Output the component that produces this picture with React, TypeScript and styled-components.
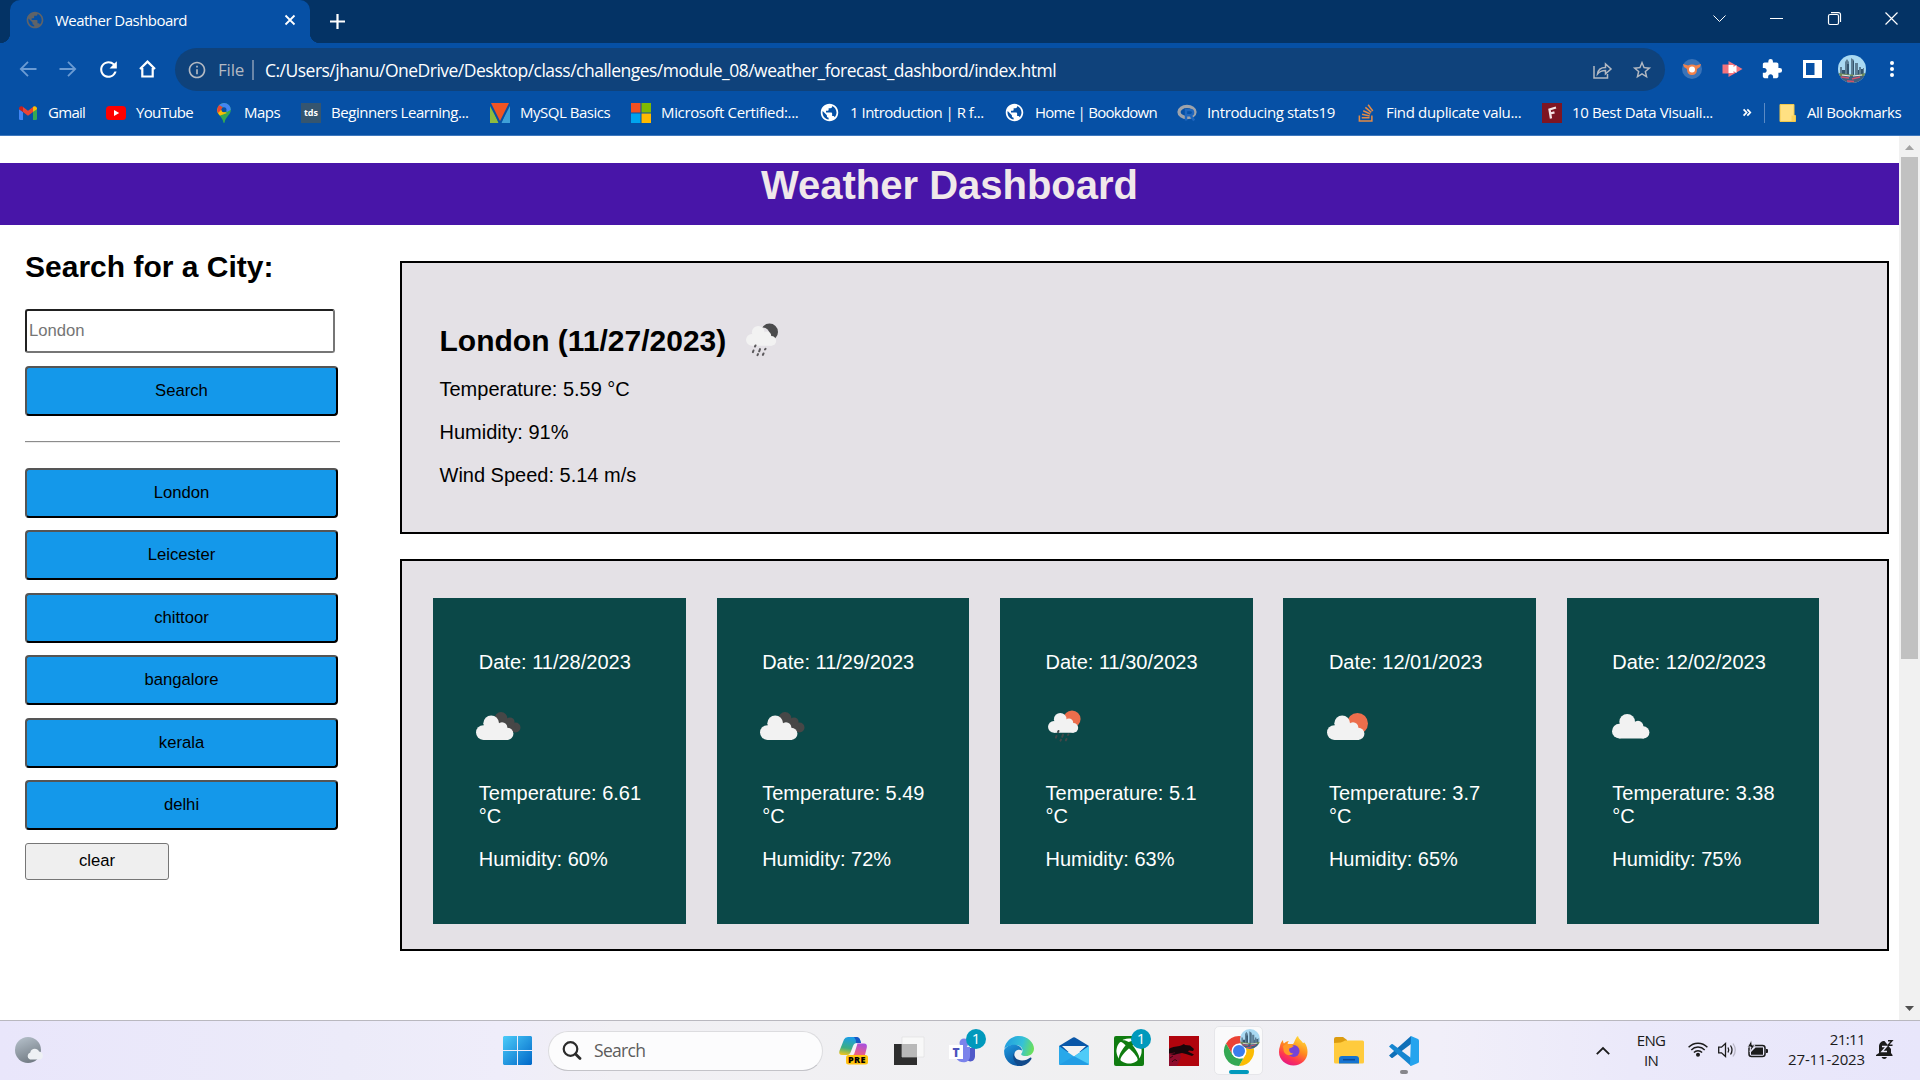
import React from 'react';
import styled, { createGlobalStyle } from 'styled-components';
import { MdPublic, MdExtension, MdRefresh, MdStarBorder, MdInfoOutline } from 'react-icons/md';
import { FaStackOverflow, FaXbox } from 'react-icons/fa';

const Global = createGlobalStyle`
  *, *::before, *::after { box-sizing: border-box; }
  body { margin: 0; background: #fff; overflow: hidden; font-family: "Liberation Sans", Arial, sans-serif; color: #000; }
`;

const uiFont = '"Open Sans", "Noto Sans", sans-serif';

const Screen = styled.div`
  width: 1920px;
  height: 1080px;
  display: flex;
  flex-direction: column;
  overflow: hidden;
`;

const Text = styled.span<{ $ls?: number }>`
  font-family: ${uiFont};
  letter-spacing: ${(p) => p.$ls ?? -0.45}px;
  white-space: nowrap;
`;

/* ---------- browser chrome ---------- */

const TabStrip = styled.div`
  height: 43px;
  background: #043365;
  display: flex;
  padding-left: 10px;
  color: #fff;
`;

const Tab = styled.div`
  position: relative;
  width: 300px;
  height: 43px;
  background: #0650a5;
  border-radius: 10px 10px 0 0;
  display: flex;
  align-items: center;
  padding: 0 15px 3px 15px;
  font-size: 15px;
  &::before,
  &::after {
    content: '';
    position: absolute;
    bottom: 0;
    width: 10px;
    height: 10px;
  }
  &::before {
    left: -10px;
    background: radial-gradient(circle at 0 0, transparent 10px, #0650a5 10.5px);
  }
  &::after {
    right: -10px;
    background: radial-gradient(circle at 100% 0, transparent 10px, #0650a5 10.5px);
  }
`;

const TabTitle = styled(Text)`
  margin-left: 10px;
  flex: 1;
`;

const Glyph = styled.svg`
  display: block;
  flex: none;
  overflow: visible;
`;

const NewTab = styled.div`
  display: flex;
  align-items: center;
  margin-left: 20px;
  padding-bottom: 1px;
`;

const WindowControls = styled.div`
  margin-left: auto;
  display: flex;
  align-items: center;
  height: 37px;
`;

const WindowButton = styled.div`
  width: 57.3px;
  display: flex;
  justify-content: center;
`;

const Toolbar = styled.div`
  height: 53px;
  background: #0650a5;
  display: flex;
  align-items: center;
  padding: 0 8px;
  color: #fff;
`;

const ToolCell = styled.div<{ $dim?: boolean }>`
  width: 40px;
  height: 40px;
  padding-bottom: 1px;
  display: flex;
  align-items: center;
  justify-content: center;
  color: ${(p) => (p.$dim ? '#6b9bd3' : '#fff')};
`;

const Omnibox = styled.div`
  width: 1490px;
  height: 43px;
  margin: 0 7px;
  border-radius: 22px;
  background: #0f427b;
  display: flex;
  align-items: center;
  padding: 0 3px 0 12px;
  color: #b3b9c2;
`;

const Scheme = styled(Text)`
  margin-left: 11px;
  font-size: 17px;
`;

const SchemeRule = styled.span`
  width: 2px;
  height: 20px;
  margin: 0 11px 0 8px;
  background: #6a86a8;
`;

const Address = styled(Text)`
  flex: 1;
  font-size: 17.5px;
  color: #fff;
`;

const OmniAction = styled.div`
  width: 40px;
  display: flex;
  justify-content: center;
`;

const BookmarkBar = styled.div`
  height: 40px;
  background: #0650a5;
  border-bottom: 1px solid #3e78bd;
  display: flex;
  align-items: center;
  padding: 0 16px 6px 18px;
  color: #fff;
  font-size: 15px;
`;

const Bookmark = styled.div<{ $w: number }>`
  width: ${(p) => p.$w}px;
  flex: none;
  display: flex;
  align-items: center;
  gap: 10px;
`;

const BookmarkLabel = styled(Text)`
  padding-bottom: 2px;
`;

const BookmarkRule = styled.span`
  width: 1px;
  height: 20px;
  margin: 0 14px 0 13px;
  background: #5b8ac4;
`;

const FaviconTile = styled.span<{ $bg: string; $size: number }>`
  width: 20px;
  height: 20px;
  flex: none;
  background: ${(p) => p.$bg};
  color: #fff;
  font: 700 ${(p) => p.$size}px/19px ${uiFont};
  text-align: center;
`;

/* ---------- page ---------- */

const Viewport = styled.div`
  height: 884px;
  display: flex;
`;

const Page = styled.div`
  flex: 1;
  background: #fff;
`;

const Banner = styled.h1`
  margin: 27px 0 0;
  height: 62px;
  background: #4815a8;
  color: #f0e8ea;
  font-size: 40px;
  line-height: 44px;
  font-weight: 700;
  text-align: center;
`;

const Columns = styled.div`
  display: flex;
`;

const Sidebar = styled.aside`
  width: 400px;
  padding: 25px 60px 0 25px;
`;

const SidebarTitle = styled.h2`
  margin: 0 0 25px;
  font-size: 30px;
  line-height: 34px;
`;

const CityInput = styled.input`
  display: block;
  width: 310px;
  height: 44px;
  padding: 0 2px;
  border: 2px solid;
  border-color: #212121 #767676 #767676 #212121;
  border-radius: 3px;
  background: #fff;
  font: 16.67px 'Liberation Sans', Arial, sans-serif;
  &::placeholder {
    color: #757575;
  }
`;

const CityButton = styled.button`
  display: block;
  width: 313px;
  height: 50px;
  padding: 0;
  border: 2px solid;
  border-color: #555 #000 #000 #555;
  border-radius: 4px;
  background: #1498ea;
  color: #000;
  font: 16.67px 'Liberation Sans', Arial, sans-serif;
`;

const SearchButton = styled(CityButton)`
  margin-top: 13px;
`;

const Rule = styled.hr`
  width: 315px;
  margin: 25px 0 24.75px;
  height: 2px;
  border: 0;
  border-top: 1px solid #8c8c8c;
  border-bottom: 1px solid #ececec;
`;

const History = styled.div`
  display: flex;
  flex-direction: column;
  gap: 12.5px;
`;

const ClearButton = styled.button`
  width: 144px;
  height: 37px;
  padding: 0;
  border: 1px solid #767676;
  border-radius: 3px;
  background: #efefef;
  color: #000;
  font: 16.67px 'Liberation Sans', Arial, sans-serif;
`;

const Main = styled.main`
  width: 1489px;
  padding-top: 36px;
  display: flex;
  flex-direction: column;
  gap: 25px;
`;

const Today = styled.section`
  height: 273px;
  padding: 61px 37.5px 0;
  border: 2px solid #000;
  background: #e4e1e6;
`;

const TodayHeading = styled.h2`
  margin: 0;
  height: 34px;
  display: flex;
  align-items: center;
  gap: 19px;
  font-size: 30px;
  line-height: 34px;
`;

const Reading = styled.p`
  margin: 20px 0 0;
  font-size: 20px;
  line-height: 23px;
`;

const Forecast = styled.section`
  height: 392px;
  padding: 37px 31px 25px 31.3px;
  border: 2px solid #000;
  background: #e4e1e6;
  display: flex;
  gap: 30.88px;
`;

const Card = styled.article`
  width: 252.5px;
  flex: none;
  padding: 53px 34px 0 45.5px;
  background: #0b4848;
  color: #fff;
  font-size: 20px;
  line-height: 23px;
`;

const CardIcon = styled.div`
  height: 68px;
  margin: 20px 0 0 -2.5px;
  padding-top: 12px;
`;

const ScrollTrack = styled.div`
  width: 21px;
  background: #f1f1f1;
  display: flex;
  flex-direction: column;
  align-items: center;
  padding: 9px 0 9px;
`;

const ScrollThumb = styled.div`
  width: 17px;
  height: 502px;
  margin: 7px 0 auto;
  background: #c1c1c1;
`;

/* ---------- taskbar ---------- */

const Taskbar = styled.footer`
  height: 60px;
  border-top: 1px solid #b9b8bf;
  background: linear-gradient(90deg, #e9e6fb 0, #ecebf9 18%, #efedfa 26%, #f1f0f4 32%, #f0f0f1 60%, #f1eff9 75%, #ebe9fa 85%, #e8e6fb 100%);
  display: flex;
  align-items: center;
  color: #1b1b1b;
`;

const WeatherWidget = styled.div`
  width: 503px;
  padding: 0 0 1px 15px;
`;

const SearchPill = styled.div`
  width: 275px;
  height: 40px;
  margin: 0 3px 0 16px;
  border: 1px solid #dcdcdf;
  border-bottom-color: #c3c3c8;
  border-radius: 20px;
  background: #fcfcfd;
  display: flex;
  align-items: center;
  gap: 12px;
  padding: 0 0 1px 14px;
  font-size: 17.5px;
  color: #5c5c5c;
`;

const AppSlot = styled.div`
  position: relative;
  width: 55px;
  height: 59px;
  display: flex;
  align-items: center;
  justify-content: center;
`;

const ActiveTile = styled.div`
  width: 49px;
  height: 49px;
  border: 1px solid #e6e6ea;
  border-radius: 5px;
  background: #fafafb;
  display: flex;
  align-items: center;
  justify-content: center;
`;

const Indicator = styled.span<{ $w: number; $c: string }>`
  position: absolute;
  left: calc(50% - ${(p) => p.$w / 2}px);
  bottom: 6px;
  width: ${(p) => p.$w}px;
  height: 4px;
  border-radius: 2px;
  background: ${(p) => p.$c};
`;

const CountBadge = styled.span`
  position: absolute;
  right: 5px;
  top: 8px;
  width: 20px;
  height: 20px;
  border-radius: 50%;
  background: #0099bc;
  color: #fff;
  font: 15px/19px ${uiFont};
  text-align: center;
`;

const AvatarBadge = styled.span`
  position: absolute;
  right: 6px;
  top: 8px;
`;

const Tray = styled.div`
  margin-left: auto;
  width: 330px;
  height: 59px;
  display: flex;
  align-items: center;
  padding: 0 0 0 6px;
`;

const TrayStack = styled.div<{ $w: number; $align: string; $ml: number; $lift: number }>`
  width: ${(p) => p.$w}px;
  margin-left: ${(p) => p.$ml}px;
  padding-bottom: ${(p) => p.$lift}px;
  display: flex;
  flex-direction: column;
  align-items: ${(p) => p.$align};
  font-size: 15px;
  line-height: 20px;
`;

const TrayIcon = styled.div<{ $ml: number }>`
  margin-left: ${(p) => p.$ml}px;
  padding-bottom: 2px;
`;

/* ---------- drawings ---------- */

const Cloud = ({ x = 0, y = 0, s = 1, fill = '#f2f2f2' }: { x?: number; y?: number; s?: number; fill?: string }) => (
  <g transform={`translate(${x} ${y}) scale(${s})`} fill={fill}>
    <circle cx="7.5" cy="17.5" r="7.5" />
    <circle cx="15.5" cy="8" r="8" />
    <circle cx="26.5" cy="12.5" r="5.5" />
    <circle cx="32" cy="18.8" r="6.2" />
    <path d="M7.5 12h20l5 4v9H7.5z" />
  </g>
);

const Drops = ({ x, y, fill }: { x: number; y: number; fill: string }) => (
  <g transform={`translate(${x} ${y})`} stroke={fill} strokeWidth="2" strokeLinecap="round">
    <path d="M3.5 0l-.5 1M1.5 5l-.6 1.6M8 3.600l-.8 2.200M6 8.600l-.5 1M13.500 3.300l-.5 .7M11.500 8l-.6 1.400" />
  </g>
);

type Kind = 'overcast' | 'rainDay' | 'rainNight' | 'partly' | 'cloud';

const WeatherIcon = ({ kind }: { kind: Kind }) => {
  if (kind === 'rainNight')
    return (
      <Glyph width="34" height="34" viewBox="0 1 34 34">
        <circle cx="24.5" cy="9" r="8.5" fill="#4b4b4d" />
        <circle cx="18" cy="11" r="6.5" fill="#e4e1e6" />
        <Cloud x={1} y={3} s={0.79} />
        <Drops x={7} y={22.5} fill="#5b595c" />
      </Glyph>
    );
  return (
    <Glyph width="48" height="40" viewBox="0 0 48 40">
      {kind === 'overcast' && (
        <>
          <g fill="#474747">
            <circle cx="25" cy="12.5" r="6.5" />
            <circle cx="34" cy="16" r="4.6" />
            <circle cx="39.5" cy="21.5" r="5" />
            <path d="M22 13h14l5 12-9 2z" />
          </g>
          <Cloud x={0} y={9.4} s={0.98} />
        </>
      )}
      {kind === 'partly' && (
        <>
          <circle cx="31.5" cy="17.5" r="10.5" fill="#ec6e4c" />
          <Cloud x={1} y={9.4} s={0.98} />
        </>
      )}
      {kind === 'rainDay' && (
        <>
          <circle cx="29" cy="13" r="8.6" fill="#ec6e4c" />
          <Cloud x={5} y={7} s={0.79} />
          <Drops x={12} y={25} fill="#43484a" />
        </>
      )}
      {kind === 'cloud' && <Cloud x={2} y={8} s={0.98} />}
    </Glyph>
  );
};

const Avatar = ({ size }: { size: number }) => (
  <Glyph width={size} height={size} viewBox="0 0 28 28">
    <clipPath id={`av${size}`}>
      <circle cx="14" cy="14" r="14" />
    </clipPath>
    <g clipPath={`url(#av${size})`}>
      <path fill="#a9d9f2" d="M0 0h28v28H0z" />
      <path fill="#5d7e94" d="M2 12h2v9H2zM7 7l2-3 2 3v14H7zM13 3l3 2v16h-3zM17 8h3v13h-3zM21 12h2v9h-2zM25 13h1v8h-1z" />
      <path fill="#33546d" d="M4 15h3v6H4zM9 9h2v11H9zM15 6h1v14h-1zM20 15h1v6h-1zM23 14h2v6h-2z" />
      <path fill="#6d8b58" d="M0 18l8 1 10 1 10-2v4H0z" />
      <path fill="#3f5f7e" d="M0 21h28v7H0z" />
      <path stroke="#d0526b" strokeWidth="1.4" d="M3 22l8 1M14 24l8-2M9 26l7 .5" />
      <path stroke="#e5eaf0" d="M4 20l8 1M15 21l9-1" />
    </g>
  </Glyph>
);

const GmailIcon = () => (
  <Glyph width="20" height="20" viewBox="0 0 20 20">
    <path fill="#4285f4" d="M1 6l4 3v8H2.300a1.300 1.300 0 0 1-1.300-1.300z" />
    <path fill="#34a853" d="M15 9l4-3v9.700a1.300 1.300 0 0 1-1.300 1.300H15z" />
    <path fill="#ea4335" d="M5 4l5 3.800L15 4v5l-5 3.800L5 9z" />
    <path fill="#c5221f" d="M1 5.500c0-2 2-3 3.500-1.900L5 4v5L1 6.300z" />
    <path fill="#fbbc04" d="M19 5.500c0-2-2-3-3.500-1.900L15 4v5l4-2.700z" />
  </Glyph>
);

const YouTubeIcon = () => (
  <Glyph width="20" height="20" viewBox="0 0 20 20">
    <rect y="3" width="20" height="14" rx="3.500" fill="#f00" />
    <path fill="#fff" d="M8 7l5.200 3L8 13z" />
  </Glyph>
);

const MapsIcon = () => (
  <Glyph width="20" height="20" viewBox="0 0 20 20">
    <clipPath id="pin">
      <path d="M10 0a6.800 6.800 0 0 1 6.800 7c0 5-5.300 6.500-6.100 12.300-.2.900-1.200.9-1.400 0C8.500 13.500 3.200 12 3.200 7A6.800 6.800 0 0 1 10 0z" />
    </clipPath>
    <g clipPath="url(#pin)">
      <path fill="#34a853" d="M0 0h20v20H0z" />
      <path fill="#fbbc04" d="M0 4v11l13-5L7 7z" />
      <path fill="#ea4335" d="M0 0l4 0 5 5-6 6L0 7z" />
      <path fill="#4285f4" d="M4.500 2L10-1h10v6l-7 4-4-5z" />
    </g>
    <circle cx="10" cy="6.800" r="2.500" fill="#0650a5" />
  </Glyph>
);

const MySqlIcon = () => (
  <Glyph width="20" height="20" viewBox="0 0 20 20">
    <path fill="#8dbb3f" d="M0 3l9 17H0z" />
    <path fill="#3fa0d8" d="M20 3l-9 17h9z" />
    <path fill="#0650a5" d="M0 0h20L11.500 20h-3z" />
    <path fill="#f05423" d="M1 0h18l-9 18z" />
  </Glyph>
);

const MicrosoftIcon = () => (
  <Glyph width="20" height="20" viewBox="0 0 20 20">
    <path fill="#f25022" d="M0 0h9.500v9.500H0z" />
    <path fill="#7fba00" d="M10.500 0H20v9.500h-9.500z" />
    <path fill="#00a4ef" d="M0 10.500h9.500V20H0z" />
    <path fill="#ffb900" d="M10.500 10.500H20V20h-9.500z" />
  </Glyph>
);

const RIcon = () => (
  <Glyph width="20" height="20" viewBox="0 0 20 20">
    <ellipse cx="10" cy="9" rx="8" ry="5.600" fill="none" stroke="#9ea3ab" strokeWidth="3.300" />
    <path fill="none" stroke="#1f66bd" strokeWidth="2.400" d="M9 17.500V7h4.500a2.600 2.600 0 0 1 0 5.200H9M13.500 12.500l3.700 5" />
  </Glyph>
);

const FolderIcon = () => (
  <Glyph width="18" height="20" viewBox="0 0 18 20">
    <path fill="#ffe082" stroke="#f1c84b" d="M1 1.500h14v11h1.500v6H1z" />
    <path fill="#fbd25a" d="M12.500 12.500H16v5.500h-3.500z" />
  </Glyph>
);

const WindowsIcon = () => (
  <Glyph width="29" height="29" viewBox="0 0 29 29">
    <defs>
      <linearGradient id="win" x1="0" y1="0" x2="1" y2="1">
        <stop offset="0" stopColor="#4cccf9" />
        <stop offset="1" stopColor="#0067c8" />
      </linearGradient>
    </defs>
    <path fill="url(#win)" d="M1 0h13v14H0V1zM15 0h13l1 1v13H15zM0 15h14v14H1l-1-1zM15 15h14v13l-1 1H15z" />
  </Glyph>
);

const CopilotIcon = () => (
  <Glyph width="29" height="28" viewBox="0 0 29 28">
    <defs>
      <linearGradient id="cpA" x1="0.400" y1="0" x2="0.200" y2="1">
        <stop offset="0" stopColor="#1b9de8" />
        <stop offset=".6" stopColor="#3cae83" />
        <stop offset="1" stopColor="#f3c51c" />
      </linearGradient>
      <linearGradient id="cpB" x1="0.700" y1="0" x2="0.300" y2="1">
        <stop offset="0" stopColor="#a64fe0" />
        <stop offset="1" stopColor="#f5607b" />
      </linearGradient>
    </defs>
    <path fill="url(#cpA)" d="M5 2.500Q6 0 9 0h8q3 0 4 3l1 3h-4q-3 0-4 3l-2.500 6.500Q10.500 18 8 18H3q-3.500 0-2.600-4z" />
    <path fill="#1757c5" d="M15 0h3q3 0 4 6h-5q0-4-2-6z" />
    <path fill="url(#cpB)" d="M18 6.500h7q3.500 0 2.800 4L26 18H12.500q2-.5 2.700-3L17 9z" />
    <path fill="#f3f3f6" d="M15.500 7.500q1-1 3-1L15 17.500q-.5.500-3.500.5z" />
    <rect x="7" y="18" width="22" height="9.500" rx="2.500" fill="#ffc20e" />
    <text x="18" y="26" fontSize="9" fontWeight="800" textAnchor="middle" fontFamily="Open Sans, sans-serif" letterSpacing=".4">PRE</text>
  </Glyph>
);

const TaskViewIcon = () => (
  <Glyph width="30" height="28" viewBox="0 0 30 28">
    <path fill="#2e2e2e" d="M0 7h23v21H0z" />
    <path fill="#f8f8f8" stroke="#dedede" strokeWidth=".6" d="M8 0h22v20H8z" />
    <path fill="#b9b9b9" d="M8 7h15v13H8z" />
  </Glyph>
);

const TeamsIcon = () => (
  <Glyph width="34" height="30" viewBox="1 0 34 30">
    <circle cx="18" cy="7" r="4.500" fill="#7b83eb" />
    <path fill="#5059c9" d="M19 12h10v8c0 6-6 7-9 3z" />
    <path fill="#7b83eb" d="M10 11h14v9c0 8-11 8-14 2z" />
    <path fill="#fff" d="M3 9h14v14H3z" />
    <text x="10" y="20.500" fontSize="12" fontWeight="800" textAnchor="middle" fill="#4b53bc" fontFamily="Open Sans, sans-serif">T</text>
  </Glyph>
);

const EdgeIcon = () => (
  <Glyph width="30" height="30" viewBox="0 0 30 30">
    <defs>
      <linearGradient id="edA" x1="0" y1=".3" x2="1" y2=".5">
        <stop offset="0" stopColor="#219de0" />
        <stop offset=".6" stopColor="#35c1d8" />
        <stop offset="1" stopColor="#6be05a" />
      </linearGradient>
      <linearGradient id="edB" x1="0" y1="0" x2=".5" y2="1">
        <stop offset="0" stopColor="#1f9be0" />
        <stop offset="1" stopColor="#0c59a4" />
      </linearGradient>
    </defs>
    <path fill="url(#edA)" d="M.3 13C1.500 5 8 0 15 0c9 0 15 7 15 12.500 0 5-4 7.500-8 7.500-3.500 0-5.300-1.200-4.700-2.200 3-3.800.2-8.800-5.300-8.800C6 9 1.500 11 .3 13z" />
    <path fill="url(#edB)" d="M.2 14C2 10.500 6 8.800 10.500 8.800c5 0 7.500 3.200 7.500 5.700-4-2.500-8 1-8 5C10 24 13.500 28.500 18 29.600 8 31.800-.8 24.500.2 14z" />
    <path fill="#114a8b" d="M11 15.500c-2.500 4 1 9 7 9 3.500 0 6-1.200 8-2.700 1-.6 2 .3 1.300 1.400C24.500 27.500 20.500 30 16 30c-6-1.500-9-9.500-5-14.500z" />
  </Glyph>
);

const MailIcon = () => (
  <Glyph width="30" height="28" viewBox="0 0 30 28">
    <path fill="#0a57a8" d="M0 9L14 .5q1-.6 2 0L30 9v6H0z" />
    <path fill="#f3f3f3" d="M3 9h24L15 20z" />
    <path fill="#28a8ea" d="M0 9l15 10.500L30 9v18q0 1-1 1H1q-1 0-1-1z" />
    <path fill="#4fcbf8" d="M30 9v18L13 18.300l2 1.200z" />
    <path fill="#1683d8" d="M0 28l15-9 15 9z" opacity=".3" />
  </Glyph>
);

const DragonIcon = () => (
  <Glyph width="30" height="30" viewBox="0 0 30 30">
    <path fill="#b0040d" d="M0 0h30v30H0z" />
    <path fill="#8e0c2c" d="M0 12l10 3 2 6-4 9H0z" />
    <path fill="#17060a" d="M0 13C4 10 8 11 12 9.500l3-1.500 1 1 5 .5 4 3.500-1 2-4-.5-1 1 6 3-2 1.500-6-2-4-1-5 1-3 1 1-2.500-6 1zM1 18q4-1 7-1l-3 2z" />
    <path stroke="#34070f" fill="none" d="M1 22l3-2M3 26q3-4 5-1" />
  </Glyph>
);

const ChromeIcon = () => (
  <Glyph width="30" height="30" viewBox="0 0 30 30">
    <path fill="#ea4335" d="M2 7.500A15 15 0 0 1 28 7.500H15L8.500 18.700z" />
    <path fill="#fbbc04" d="M28 7.500A15 15 0 0 1 15 30l6.500-11.300L21 7.500z" />
    <path fill="#34a853" d="M2 7.500l6.500 11.200L15 22.500h4.300L15 30A15 15 0 0 1 2 7.500z" />
    <circle cx="15" cy="15" r="7.500" fill="#fff" />
    <circle cx="15" cy="15" r="6" fill="#3b7ded" />
  </Glyph>
);

const FirefoxIcon = () => (
  <Glyph width="29" height="30" viewBox="0 0 29 30">
    <defs>
      <linearGradient id="ff" x1=".8" y1="0" x2=".3" y2="1">
        <stop offset="0" stopColor="#ffe33a" />
        <stop offset=".45" stopColor="#ff8a1e" />
        <stop offset=".75" stopColor="#ff3750" />
        <stop offset="1" stopColor="#e31587" />
      </linearGradient>
    </defs>
    <path fill="url(#ff)" d="M1 10c.5-3 2-5 3-6 0 1.500.2 2.500 1 3.500C6.500 6 8 5 10 5c-1 1-1.500 2-1.200 3H14c2-2 2-6 5-8 .5 3 3 4 5 7l1.500-.5C28 10 28.500 13 28.500 16c0 8-6.500 13.500-14 13.500S0 24 0 16c0-2 .2-4 1-6z" />
    <circle cx="14.500" cy="15" r="6" fill="#7543d8" />
    <path fill="#ff9a27" d="M4 10c3-3 7-2.500 11 0-2 1-2.500 2-4.500 2.300-1.300 2.500 1 5.700 4 5.200-4 3.500-10 1-10-4z" />
  </Glyph>
);

const ExplorerIcon = () => (
  <Glyph width="30" height="27" viewBox="0 0 30 27">
    <path fill="#dc9c10" d="M0 2q0-2 2-2h7l4 3v6H0z" />
    <path fill="#ffcb3d" d="M0 6q8 0 11-2.500h17.500q1.500 0 1.500 1.500v20q0 1.500-1.500 1.500h-27Q0 26.500 0 25z" />
    <path fill="#1674d1" d="M5 26.500V22q0-3 3-3h14q3 0 3 3v4.500z" />
    <path stroke="#0b4b97" strokeWidth="1.500" d="M9 22.700h12" />
  </Glyph>
);

const VsCodeIcon = () => (
  <Glyph width="30" height="30" viewBox="0 0 30 30">
    <path fill="#0f6fb8" d="M0 19.500l2.300 2.200q.8.600 1.500 0L22 8V0z" />
    <path fill="#1686d0" d="M0 10.500l2.300-2.200q.8-.6 1.500 0L22 22v8z" />
    <path fill="#25a4ee" d="M22 0l7 3q1 .5 1 1.500v21q0 1-1 1.500l-7 3-1-1z" />
  </Glyph>
);

const WeatherMoon = () => (
  <Glyph width="28" height="27" viewBox="0 0 28 27">
    <defs>
      <linearGradient id="moon" x1=".2" y1="0" x2=".6" y2="1">
        <stop offset="0" stopColor="#b4bfc9" />
        <stop offset="1" stopColor="#727b84" />
      </linearGradient>
    </defs>
    <circle cx="13" cy="13" r="13" fill="url(#moon)" />
    <path fill="#eef1f4" d="M15 22.500a3.700 3.700 0 0 1 .3-7c.5-4.800 7.500-4.800 8.700-1 5 .5 5 7.500 1 8z" />
  </Glyph>
);

const FluentF = () => (
  <Glyph width="20" height="20" viewBox="0 0 20 20">
    <path fill="#7e1522" d="M0 0h20v20H0z" />
    <path fill="none" stroke="#f3e3e5" strokeWidth="2.300" d="M14 4.500L7.500 6.500 9 15.500M8.200 10.500l4.300-1.200" />
  </Glyph>
);

/* ---------- data ---------- */

const bookmarks: { label: string; w: number; ls: number; icon: React.ReactNode }[] = [
  { label: 'Gmail', w: 88, ls: -0.7, icon: <GmailIcon /> },
  { label: 'YouTube', w: 108, ls: -0.65, icon: <YouTubeIcon /> },
  { label: 'Maps', w: 87, ls: -0.5, icon: <MapsIcon /> },
  { label: 'Beginners Learning...', w: 189, ls: -0.45, icon: <FaviconTile $bg="#35556f" $size={9}>tds</FaviconTile> },
  { label: 'MySQL Basics', w: 141, ls: -0.49, icon: <MySqlIcon /> },
  { label: 'Microsoft Certified:...', w: 188, ls: -0.35, icon: <MicrosoftIcon /> },
  { label: '1 Introduction | R f...', w: 185, ls: -0.51, icon: <MdPublic size={21} /> },
  { label: 'Home | Bookdown', w: 173, ls: -0.74, icon: <MdPublic size={21} /> },
  { label: 'Introducing stats19', w: 179, ls: -0.37, icon: <RIcon /> },
  { label: 'Find duplicate valu...', w: 186, ls: -0.34, icon: <FaStackOverflow size={20} color="#e28a46" /> },
  { label: '10 Best Data Visuali...', w: 201, ls: -0.36, icon: <FluentF /> },
];

const cities = ['London', 'Leicester', 'chittoor', 'bangalore', 'kerala', 'delhi'];

const days: { date: string; kind: Kind; temp: string; humidity: string }[] = [
  { date: '11/28/2023', kind: 'overcast', temp: '6.61', humidity: '60' },
  { date: '11/29/2023', kind: 'overcast', temp: '5.49', humidity: '72' },
  { date: '11/30/2023', kind: 'rainDay', temp: '5.1', humidity: '63' },
  { date: '12/01/2023', kind: 'partly', temp: '3.7', humidity: '65' },
  { date: '12/02/2023', kind: 'cloud', temp: '3.38', humidity: '75' },
];

/* ---------- sections ---------- */

const line = { fill: 'none', stroke: 'currentColor' } as const;

const BrowserChrome = () => (
  <>
    <TabStrip>
      <Tab>
        <MdPublic size={20} color="#5f6368" />
        <TabTitle $ls={-0.53}>Weather Dashboard</TabTitle>
        <Glyph width="10" height="10" viewBox="0 0 10 10" {...line} strokeWidth="1.800">
          <path d="M.5.5l9 9M9.500.5l-9 9" />
        </Glyph>
      </Tab>
      <NewTab>
        <Glyph width="15" height="15" viewBox="0 0 15 15" {...line} strokeWidth="2.200">
          <path d="M7.500 0v15M0 7.500h15" />
        </Glyph>
      </NewTab>
      <WindowControls>
        <WindowButton>
          <Glyph width="13" height="7" viewBox="0 0 13 7" {...line} strokeWidth="1">
            <path d="M.5.5l6 6 6-6" />
          </Glyph>
        </WindowButton>
        <WindowButton>
          <Glyph width="13" height="1" viewBox="0 0 13 1">
            <path fill="#fff" d="M0 0h13v1H0z" />
          </Glyph>
        </WindowButton>
        <WindowButton>
          <Glyph width="13" height="13" viewBox="0 0 13 13" {...line} strokeWidth="1.200">
            <rect x=".5" y="2.500" width="10" height="10" rx="1.500" />
            <path d="M3 .6h7.500a2 2 0 0 1 2 2V10" />
          </Glyph>
        </WindowButton>
        <WindowButton>
          <Glyph width="13" height="13" viewBox="0 0 13 13" {...line} strokeWidth="1.200">
            <path d="M.5.5l12 12M12.500.5l-12 12" />
          </Glyph>
        </WindowButton>
      </WindowControls>
    </TabStrip>
    <Toolbar>
      <ToolCell $dim>
        <Glyph width="17" height="16" viewBox="0.500 0 17 16" {...line} strokeWidth="1.800">
          <path d="M17 8H1.500M8.500.8L1.300 8l7.200 7.200" />
        </Glyph>
      </ToolCell>
      <ToolCell $dim>
        <Glyph width="17" height="16" viewBox="0.500 0 17 16" {...line} strokeWidth="1.800">
          <path d="M0 8h15.500M8.500.8L15.700 8l-7.200 7.200" />
        </Glyph>
      </ToolCell>
      <ToolCell>
        <MdRefresh size={25} />
      </ToolCell>
      <ToolCell>
        <Glyph width="18" height="18" viewBox="0.500 0 18 18" {...line} strokeWidth="2.200">
          <path d="M1.500 9L9 1.600 16.500 9M3.800 8v8.500h10.400V8" />
        </Glyph>
      </ToolCell>
      <Omnibox>
        <MdInfoOutline size={20} />
        <Scheme $ls={-0.22}>File</Scheme>
        <SchemeRule />
        <Address $ls={-0.515}>
          C:/Users/jhanu/OneDrive/Desktop/class/challenges/module_08/weather_forecast_dashbord/index.html
        </Address>
        <OmniAction>
          <Glyph width="19" height="18" viewBox="0 0 19 18" {...line} strokeWidth="1.500">
            <path d="M1 5v12h13.500v-4M4.500 13c.5-4 3.500-6.500 8-6.500V3l5.500 5-5.500 4.800V9.500c-3.500 0-6 1-8 3.500z" />
          </Glyph>
        </OmniAction>
        <OmniAction>
          <MdStarBorder size={22} />
        </OmniAction>
      </Omnibox>
      <ToolCell>
        <Glyph width="20" height="20" viewBox="0 0 20 20">
          <circle cx="10" cy="10" r="10" fill="#3a73b8" />
          <path fill="#f4824a" d="M1 5l5 1.500q4-2 8 0L19 5l-1 3-3 2q0 6-5 6t-5-6L2 8z" />
          <circle cx="10" cy="10.500" r="3" fill="#fff" />
        </Glyph>
      </ToolCell>
      <ToolCell>
        <Glyph width="20" height="18" viewBox="-0.500 0 20 18">
          <path fill="#f4737c" d="M0 4.500h6V1l14 8-14 8v-3.500H0z" />
          <path fill="#fff" d="M6 5h5v2l3-2v8l-3-2v2H6z" />
        </Glyph>
      </ToolCell>
      <ToolCell>
        <MdExtension size={22} />
      </ToolCell>
      <ToolCell>
        <Glyph width="19" height="18" viewBox="0 0 19 18">
          <path fill="#fff" fillRule="evenodd" d="M0 0h19v18H0zM3 3v12h8.500V3z" />
        </Glyph>
      </ToolCell>
      <ToolCell>
        <Avatar size={28} />
      </ToolCell>
      <ToolCell>
        <Glyph width="4" height="16" viewBox="0 0 4 16" fill="#fff">
          <circle cx="2" cy="2" r="2" />
          <circle cx="2" cy="8" r="2" />
          <circle cx="2" cy="14" r="2" />
        </Glyph>
      </ToolCell>
    </Toolbar>
    <BookmarkBar>
      {bookmarks.map((b) => (
        <Bookmark key={b.label} $w={b.w}>
          {b.icon}
          <BookmarkLabel $ls={b.ls}>{b.label}</BookmarkLabel>
        </Bookmark>
      ))}
      <Glyph width="8" height="7" viewBox="0 0 8 7" {...line} strokeWidth="1.700">
        <path d="M.6.3l3 3.200-3 3.200M4.300.3l3 3.200-3 3.200" />
      </Glyph>
      <BookmarkRule />
      <Bookmark $w={123}>
        <FolderIcon />
        <BookmarkLabel>All Bookmarks</BookmarkLabel>
      </Bookmark>
    </BookmarkBar>
  </>
);

const Dashboard = () => (
  <Page>
    <Banner>Weather Dashboard</Banner>
    <Columns>
      <Sidebar>
        <SidebarTitle>Search for a City:</SidebarTitle>
        <CityInput placeholder="London" />
        <SearchButton>Search</SearchButton>
        <Rule />
        <History>
          {cities.map((c) => (
            <CityButton key={c}>{c}</CityButton>
          ))}
          <ClearButton>clear</ClearButton>
        </History>
      </Sidebar>
      <Main>
        <Today>
          <TodayHeading>
            London (11/27/2023)
            <WeatherIcon kind="rainNight" />
          </TodayHeading>
          <Reading>Temperature: 5.59 °C</Reading>
          <Reading>Humidity: 91%</Reading>
          <Reading>Wind Speed: 5.14 m/s</Reading>
        </Today>
        <Forecast>
          {days.map((d) => (
            <Card key={d.date}>
              <div>Date: {d.date}</div>
              <CardIcon>
                <WeatherIcon kind={d.kind} />
              </CardIcon>
              <Reading>Temperature: {d.temp} °C</Reading>
              <Reading>Humidity: {d.humidity}%</Reading>
            </Card>
          ))}
        </Forecast>
      </Main>
    </Columns>
  </Page>
);

const Scrollbar = () => (
  <ScrollTrack>
    <Glyph width="9" height="5" viewBox="0 0 9 5">
      <path fill="#a3a3a3" d="M4.500 0L9 5H0z" />
    </Glyph>
    <ScrollThumb />
    <Glyph width="9" height="5" viewBox="0 0 9 5">
      <path fill="#505050" d="M0 0h9L4.500 5z" />
    </Glyph>
  </ScrollTrack>
);

const SystemTray = () => (
  <Tray>
    <Glyph width="14" height="8" viewBox="0 0 14 8" {...line} strokeWidth="1.800">
      <path d="M.8 7.200L7 1l6.200 6.200" />
    </Glyph>
    <TrayStack $w={34} $align="center" $ml={24} $lift={2}>
      <Text $ls={-0.75}>ENG</Text>
      <Text $ls={-0.75}>IN</Text>
    </TrayStack>
    <TrayIcon $ml={20}>
      <Glyph width="20" height="15" viewBox="0 0 20 15" {...line} strokeWidth="1.400">
        <path d="M.6 5.200a13 13 0 0 1 18.800 0M3.300 7.900a9.300 9.300 0 0 1 13.400 0M5.900 10.500a5.700 5.700 0 0 1 8.200 0" />
        <circle cx="10" cy="12.800" r="1.300" fill="currentColor" />
      </Glyph>
    </TrayIcon>
    <TrayIcon $ml={10}>
      <Glyph width="20" height="16" viewBox="0 0 20 16" {...line} strokeWidth="1.300">
        <path d="M.7 5.200H3.500L7.500 1.500v13l-4-3.700H.7zM10 5.500q1.500 2.500 0 5M12.500 3.500q3 4.500 0 9" />
        <path d="M15 1.500q4.500 6.500 0 13" stroke="#b9b7c6" />
      </Glyph>
    </TrayIcon>
    <TrayIcon $ml={10}>
      <Glyph width="20" height="16" viewBox="0 0 20 16">
        <rect x="1" y="3.500" width="16" height="11" rx="2.500" {...line} strokeWidth="1.500" />
        <path fill="currentColor" d="M3 12.800V10l4.500-4.500H15v7.300zM18 7h1q1 0 1 1v2q0 1-1 1h-1z" />
        <path fill="currentColor" stroke="#ebe9fa" strokeWidth=".8" d="M3.500-2L-.5 5H3l-1 5 5-7H4z" />
      </Glyph>
    </TrayIcon>
    <TrayStack $w={78} $align="flex-end" $ml={19} $lift={4}>
      <Text $ls={-0.6}>21:11</Text>
      <Text $ls={-0.13}>27-11-2023</Text>
    </TrayStack>
    <TrayIcon $ml={11}>
      <Glyph width="18" height="19" viewBox="0 0 18 19">
        <path fill="currentColor" d="M3 6.500C3 3 5.500 1 8.500 1L15 9v4l1.500 2v1H0v-1l3-2zM5.500 17h5.500q-.8 2-2.700 2t-2.800-2z" />
        <path {...line} strokeWidth="1.400" d="M12 .8h4l-4 4.400h4.500" />
        <path fill="none" stroke="#ebe9fa" strokeWidth="1.400" d="M6 6.500h4.500l-4.500 5h5" />
      </Glyph>
    </TrayIcon>
  </Tray>
);

const WindowsTaskbar = () => (
  <Taskbar>
    <WeatherWidget>
      <WeatherMoon />
    </WeatherWidget>
    <WindowsIcon />
    <SearchPill>
      <Glyph width="19" height="19" viewBox="0.500 0 19 19" fill="none" stroke="#2b2b2b" strokeWidth="2.200">
        <circle cx="8" cy="8" r="6.800" />
        <path strokeWidth="2.800" strokeLinecap="round" d="M13 13l4.500 4.500" />
      </Glyph>
      <Text $ls={-0.7}>Search</Text>
    </SearchPill>
    <AppSlot><CopilotIcon /></AppSlot>
    <AppSlot><TaskViewIcon /></AppSlot>
    <AppSlot>
      <TeamsIcon />
      <CountBadge>1</CountBadge>
    </AppSlot>
    <AppSlot><EdgeIcon /></AppSlot>
    <AppSlot><MailIcon /></AppSlot>
    <AppSlot>
      <Glyph width="30" height="30" viewBox="0 0 30 30">
        <rect width="30" height="30" rx="2" fill="#107c10" />
        <FaXbox x="2" y="2" size={26} color="#fff" />
      </Glyph>
      <CountBadge>1</CountBadge>
    </AppSlot>
    <AppSlot><DragonIcon /></AppSlot>
    <AppSlot>
      <ActiveTile>
        <ChromeIcon />
      </ActiveTile>
      <AvatarBadge>
        <Avatar size={20} />
      </AvatarBadge>
      <Indicator $w={20} $c="#0099bc" />
    </AppSlot>
    <AppSlot><FirefoxIcon /></AppSlot>
    <AppSlot><ExplorerIcon /></AppSlot>
    <AppSlot>
      <VsCodeIcon />
      <Indicator $w={8} $c="#86868b" />
    </AppSlot>
    <SystemTray />
  </Taskbar>
);

export default function App() {
  return (
    <Screen>
      <Global />
      <BrowserChrome />
      <Viewport>
        <Dashboard />
        <Scrollbar />
      </Viewport>
      <WindowsTaskbar />
    </Screen>
  );
}
